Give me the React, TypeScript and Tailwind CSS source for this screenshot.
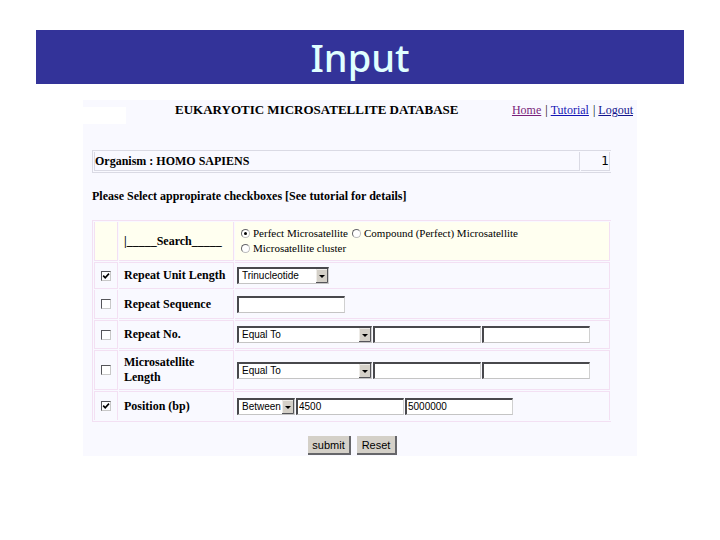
import type { ReactNode } from "react";
import clsx from "clsx";

const links = [
  { label: "Home", color: "text-[#7a1f7a]" },
  { label: "Tutorial", color: "text-[#1414b4]" },
  { label: "Logout", color: "text-[#14148c]" },
];

const inset =
  "h-[17px] rounded-none border border-t-2 border-l-2 border-t-[#48484c] border-l-[#48484c] border-r-[#d0d0d0] border-b-[#c4c4c4] bg-white";

function Check({ label, checked }: { label: string; checked?: boolean }) {
  return (
    <span className="relative mx-auto block size-[10px]">
      <input
        type="checkbox"
        aria-label={label}
        defaultChecked={checked}
        className="peer block size-[10px] appearance-none border border-t-[#55555a] border-l-[#55555a] border-r-[#c8c8c8] border-b-[#c8c8c8] bg-white"
      />
      <svg
        viewBox="0 0 10 10"
        className="pointer-events-none absolute inset-0 hidden size-[10px] peer-checked:block"
        fill="none"
        stroke="#000"
        strokeWidth="1.6"
      >
        <path d="M2.2 4.6 4.2 6.8 8 2.6" />
      </svg>
    </span>
  );
}

function Radio({ label, checked }: { label: string; checked?: boolean }) {
  return (
    <label className="flex items-center gap-[3px]">
      <span className="relative block size-[9px]">
        <input
          type="radio"
          name="kind"
          defaultChecked={checked}
          className="peer block size-[9px] appearance-none rounded-full border border-t-[#66666a] border-l-[#66666a] border-r-[#bcbcbc] border-b-[#bcbcbc] bg-white"
        />
        <span className="pointer-events-none absolute inset-[3px] hidden rounded-full bg-black peer-checked:block" />
      </span>
      {label}
    </label>
  );
}

function Select({ label, value, width }: { label: string; value: string; width: string }) {
  return (
    <span className={clsx("relative block", width)}>
      <select aria-label={label} className={clsx(inset, "block w-full appearance-none pl-[3px] text-[10px] leading-[14px]")}>
        <option>{value}</option>
      </select>
      <svg viewBox="0 0 12 14" className="pointer-events-none absolute top-[2px] right-px h-[14px] w-[12px]">
        <path d="M0 0h12v14H0z" fill="#d4d0c8" />
        <path d="M.5 13V.5H11" fill="none" stroke="#eeece8" />
        <path d="M0 13.5h11.5V0" fill="none" stroke="#55555a" />
        <path d="M3 6h6L6 9z" fill="#000" />
      </svg>
    </span>
  );
}

function TextBox({ label, value }: { label: string; value?: string }) {
  return (
    <input
      type="text"
      aria-label={label}
      defaultValue={value}
      className={clsx(inset, "block w-[108px] px-px text-[10px] leading-[14px]")}
    />
  );
}

type RowProps = {
  label: string;
  checked?: boolean;
  height: string;
  top?: boolean;
  bottom?: boolean;
  children: ReactNode;
};

function Row({ label, checked, height, top, bottom, children }: RowProps) {
  const edge = clsx("border-[#f3e0f3] py-0 align-middle", top && "border-t", bottom && "border-b");
  return (
    <tr className={height}>
      <td className={clsx(edge, "border-x")}>
        <Check label={label} checked={checked} />
      </td>
      <th className={clsx(edge, "border-r pr-6 pl-[5px] text-left whitespace-normal")}>
        <span className={clsx(label.length < 20 && "whitespace-nowrap")}>{label}</span>
      </th>
      <td className={clsx(edge, "border-r pl-[2px] font-['Liberation_Sans',sans-serif]")}>
        <div className="flex gap-px">{children}</div>
      </td>
    </tr>
  );
}

export default function App() {
  return (
    <main className="min-h-screen bg-white pt-[30px] text-black">
      <h1 className="mx-9 bg-[#333399] text-center font-['Noto_Sans',sans-serif] text-[38px] leading-[54px] font-medium text-[#e0ffff]">
        Input
      </h1>

      <form
        className="mx-[83px] mt-4 bg-[#f9f9ff] pb-px font-['Liberation_Serif',serif] text-[12px] leading-[15px]"
        onSubmit={(e) => e.preventDefault()}
      >
        <header className="flex h-[50px] items-start pr-1 leading-5">
          <div className="mt-[7px] h-[17px] w-[43px] bg-white" />
          <h2 className="ml-[49px] text-[13px] font-bold whitespace-nowrap">EUKARYOTIC MICROSATELLITE DATABASE</h2>
          <nav className="ml-auto flex gap-1 text-[12px]">
            {links.map((link, i) => (
              <span key={link.label} className="flex gap-[3px]">
                {i > 0 && <span>|</span>}
                <a href="#" className={clsx("underline", link.color)}>
                  {link.label}
                </a>
              </span>
            ))}
          </nav>
        </header>

        <div className="pr-[26px] pl-[9px]">
          <table className="w-full table-fixed border-separate border-spacing-px border-y border-l border-[#dadae4]">
            <colgroup>
              <col />
              <col className="w-[29px]" />
            </colgroup>
            <tbody>
              <tr className="h-[19px]">
                <th className="border-x border-b border-[#dadae4] p-0 text-left">Organism : HOMO SAPIENS</th>
                <td className="border-r border-b border-[#dadae4] p-0 text-right font-['DejaVu_Sans',sans-serif]">1</td>
              </tr>
            </tbody>
          </table>

          <p className="mt-[13px] leading-5 font-bold">Please Select appropirate checkboxes [See tutorial for details]</p>

          <table className="mt-[14px] w-full table-fixed border-separate border-spacing-px border-y border-l border-[#f3e0f3]">
            <colgroup>
              <col className="w-[24px]" />
              <col className="w-[115px]" />
              <col />
            </colgroup>
            <tbody>
              <tr className="h-[39px] bg-[#fffff0]">
                <td className="border-x border-b border-[#f3e0f3] p-0" />
                <th className="border-r border-b border-[#f3e0f3] py-0 pl-[5px] text-left">|_____Search_____</th>
                <td className="border-r border-b border-[#f3e0f3] py-0 pl-[6px] text-[11px]">
                  <div className="flex flex-wrap gap-x-1">
                    <Radio label="Perfect Microsatellite" checked />
                    <Radio label="Compound (Perfect) Microsatellite" />
                  </div>
                  <Radio label="Microsatellite cluster" />
                </td>
              </tr>
              <Row label="Repeat Unit Length" checked height="h-[27px]" top bottom>
                <Select label="Repeat unit" value="Trinucleotide" width="w-[92px]" />
              </Row>
              <Row label="Repeat Sequence" height="h-[29px]" bottom>
                <TextBox label="Sequence" />
              </Row>
              <Row label="Repeat No." height="h-[29px]" top bottom>
                <Select label="Repeat comparison" value="Equal To" width="w-[135px]" />
                <TextBox label="Repeats from" />
                <TextBox label="Repeats to" />
              </Row>
              <Row label="Microsatellite Length" height="h-[40px]" top bottom>
                <Select label="Length comparison" value="Equal To" width="w-[135px]" />
                <TextBox label="Length from" />
                <TextBox label="Length to" />
              </Row>
              <Row label="Position (bp)" checked height="h-[29px]" top>
                <Select label="Position comparison" value="Between" width="w-[58px]" />
                <TextBox label="Position from" value="4500" />
                <TextBox label="Position to" value="5000000" />
              </Row>
            </tbody>
          </table>
        </div>

        <div className="mt-[14px] flex justify-center gap-[6px] pr-[15px] font-['Liberation_Sans',sans-serif] text-[11px]">
          <button
            type="submit"
            className="h-[19px] w-[43px] border-r-2 border-b-2 border-[#66666a] bg-[#d4d0c8] leading-[16px]"
          >
            submit
          </button>
          <button
            type="reset"
            className="h-[19px] w-[40px] border-r-2 border-b-2 border-[#66666a] bg-[#d4d0c8] leading-[16px]"
          >
            Reset
          </button>
        </div>
      </form>
    </main>
  );
}
